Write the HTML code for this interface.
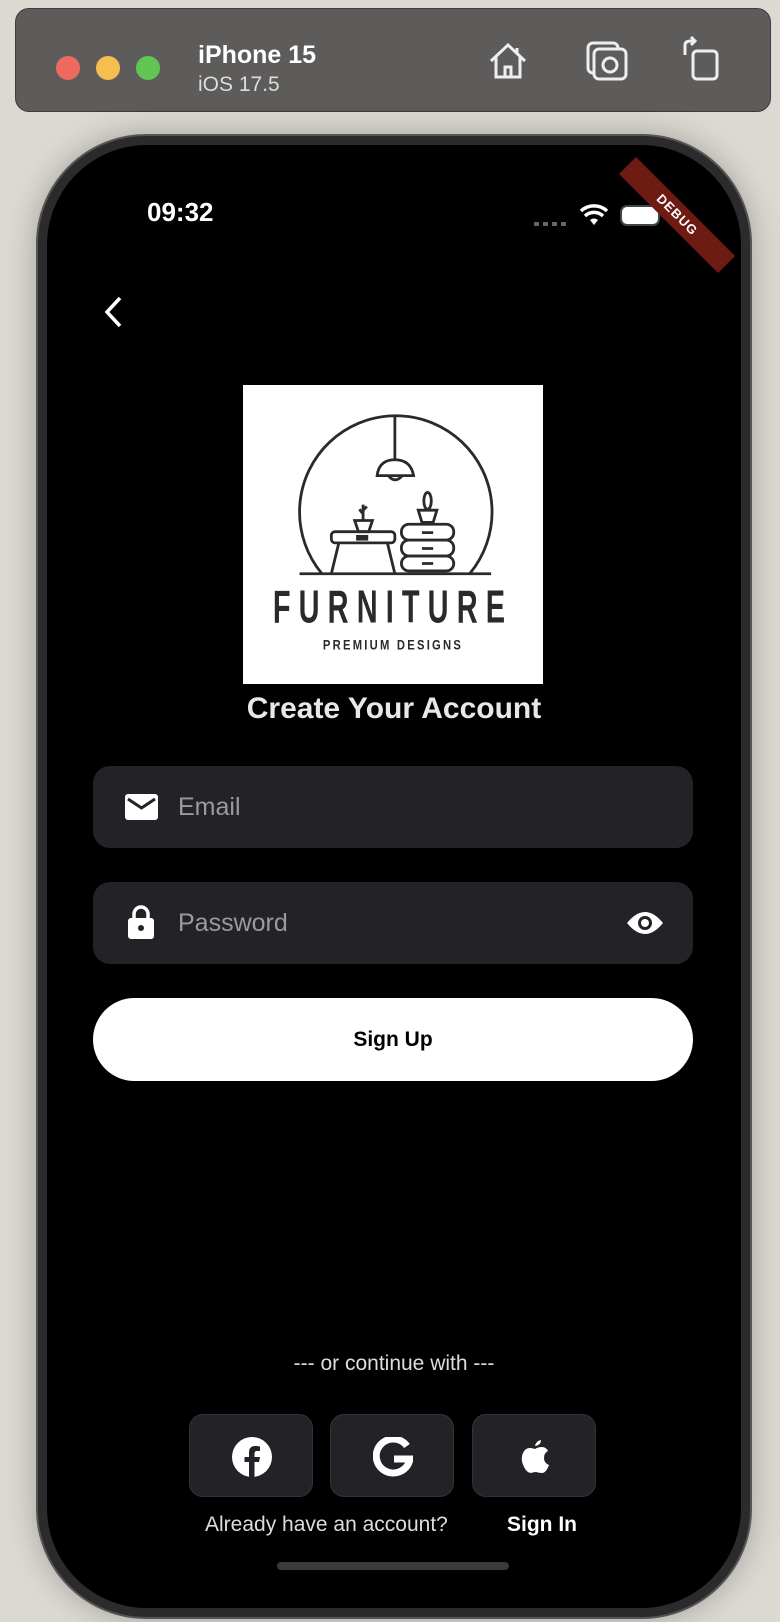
<!DOCTYPE html>
<html><head><meta charset="utf-8"><style>
*{margin:0;padding:0;box-sizing:border-box}
html,body{width:780px;height:1622px;overflow:hidden;background:#dcd8d2;font-family:"Liberation Sans",sans-serif}
.bar{position:absolute;left:15px;top:8px;width:756px;height:104px;background:#5e5c5a;border-radius:14px;border:1px solid #3e3c3a}
.dot{position:absolute;top:47px;width:24px;height:24px;border-radius:50%}
.t1{position:absolute;left:198px;top:32px;color:#fff;font-weight:bold;font-size:25px}
.t2{position:absolute;left:198px;top:64px;color:#ddd;font-size:21px}
.phone{position:absolute;left:36px;top:134px;width:716px;height:1485px;border-radius:110px;background:#2b2b2b;border:2px solid #555;box-shadow:0 0 30px rgba(0,0,0,.25)}
.screen{position:absolute;left:47px;top:145px;width:694px;height:1463px;border-radius:100px;background:#000;overflow:hidden}
.field{position:absolute;left:46px;width:600px;height:82px;background:#222227;border-radius:17px}
.ph{position:absolute;left:85px;top:27px;color:#9a9aa0;font-size:25px}
.soc{position:absolute;top:1269px;width:124px;height:83px;background:#222227;border:1px solid #33333a;border-radius:14px}
.soc svg{position:absolute;left:42px;top:22px}
</style></head><body>
<div class="bar">
<div class="dot" style="left:40px;background:#ec6a5e"></div>
<div class="dot" style="left:80px;background:#f4bf4f"></div>
<div class="dot" style="left:120px;background:#61c554"></div>
<div class="t1" style="left:182px">iPhone 15</div>
<div class="t2" style="left:182px">iOS 17.5</div>
<svg style="position:absolute;left:470px;top:30px" width="44" height="44" viewBox="0 0 44 44" fill="none" stroke="#eee" stroke-width="3"><path d="M5 22 L22 6 L39 22 M10 18 V38 H34 V18 M19 38 V28 H25 V38 M31 9 V14"/></svg>
<svg style="position:absolute;left:568px;top:28px" width="46" height="46" viewBox="0 0 46 46" fill="none" stroke="#eee" stroke-width="3"><rect x="4" y="6" width="30" height="30" rx="5"/><rect x="10" y="12" width="32" height="30" rx="5" fill="#5e5c5a"/><circle cx="26" cy="28" r="7"/></svg>
<svg style="position:absolute;left:665px;top:26px" width="44" height="48" viewBox="0 0 44 48" fill="none" stroke="#eee" stroke-width="3"><rect x="12" y="16" width="24" height="28" rx="4"/><path d="M4 20 V10 Q4 6 10 6 H14 M10 2 L14 6 L10 10"/></svg>
</div>
<div class="phone"></div>
<div class="screen">
<div style="position:absolute;left:100px;top:52px;color:#fff;font-size:26px;font-weight:bold">09:32</div>
<div style="position:absolute;left:487px;top:77px;width:34px;height:4px;background:repeating-linear-gradient(90deg,#666 0 5px,transparent 5px 9px)"></div>
<svg style="position:absolute;left:532px;top:58px" width="30" height="24" viewBox="0 0 30 24"><path d="M15 22 L19 17 A6 6 0 0 0 11 17Z" fill="#fff"/><path d="M6 13 A13 13 0 0 1 24 13 M2 8 A19 19 0 0 1 28 8" stroke="#fff" stroke-width="3.5" fill="none"/></svg>
<div style="position:absolute;left:573px;top:60px;width:40px;height:21px;border-radius:7px;background:#fff;border:2px solid #444"></div>
<div style="position:absolute;left:560px;top:58px;width:140px;height:24px;background:#6e1b14;transform:rotate(45deg);color:#fff;font-size:13px;font-weight:bold;text-align:center;line-height:24px;letter-spacing:1px">DEBUG</div>
<svg style="position:absolute;left:55px;top:150px" width="24" height="34" viewBox="0 0 24 34"><path d="M18 3 L5 17 L18 31" stroke="#fff" stroke-width="3.5" fill="none"/></svg>
<div style="position:absolute;left:196px;top:240px;width:300px;height:299px;background:#fff">
<svg width="300" height="299" viewBox="0 0 320 320" fill="none" stroke="#2a2a28" stroke-width="3">
<path d="M84 202 A103 103 0 1 1 242 202"/>
<line x1="162" y1="32" x2="162" y2="80"/>
<path d="M143 97 Q145 80 162 80 Q179 80 182 97 Z M155 97 Q162 106 170 97"/>
<line x1="60" y1="202" x2="265" y2="202"/>
<rect x="94" y="157" width="68" height="12" rx="4"/><path d="M102 169 L94 202 M154 169 L162 202"/><rect x="122" y="162" width="10" height="3"/>
<path d="M119 145 H138 L134 157 H123 Z M128 145 V128 M128 138 L124 133 M128 134 L132 130"/>
<rect x="169" y="149" width="56" height="17" rx="8"/><rect x="169" y="166" width="56" height="17" rx="8"/><rect x="169" y="183" width="56" height="16" rx="8"/>
<path d="M191 158 H203 M191 175 H203 M191 191 H203"/>
<path d="M187 134 H207 L203 147 H191 Z"/><ellipse cx="197" cy="124" rx="4" ry="9"/>
<g transform="translate(160 254) scale(0.62 1)"><text x="0" y="0" text-anchor="middle" font-family="Liberation Sans,sans-serif" font-size="50" font-weight="bold" fill="#2a2a28" stroke="none" letter-spacing="14">FURNITURE</text></g>
<g transform="translate(160 283) scale(0.8 1)"><text x="0" y="0" text-anchor="middle" font-family="Liberation Sans,sans-serif" font-size="15" font-weight="bold" fill="#2a2a28" stroke="none" letter-spacing="3">PREMIUM DESIGNS</text></g>
</svg></div>
<div style="position:absolute;left:0;width:694px;top:547px;text-align:center;color:#e8e8e8;font-size:30px;font-weight:bold">Create Your Account</div>
<div class="field" style="top:621px">
<svg style="position:absolute;left:32px;top:28px" width="33" height="26" viewBox="0 0 33 26"><rect width="33" height="26" rx="3" fill="#fff"/><path d="M3 5 L16.5 14 L30 5" stroke="#222227" stroke-width="3" fill="none"/></svg>
<div class="ph">Email</div></div>
<div class="field" style="top:737px">
<svg style="position:absolute;left:34px;top:23px" width="28" height="34" viewBox="0 0 28 34"><path d="M7 14 V9 A7 7 0 0 1 21 9 V14" stroke="#fff" stroke-width="3.5" fill="none"/><rect x="1" y="13" width="26" height="21" rx="3" fill="#fff"/><circle cx="14" cy="23" r="3" fill="#222227"/></svg>
<div class="ph">Password</div>
<svg style="position:absolute;left:533px;top:28px" width="38" height="26" viewBox="0 0 38 26"><path d="M1 13 Q19 -9 37 13 Q19 35 1 13Z" fill="#fff"/><circle cx="19" cy="13" r="7" fill="#222227"/><circle cx="19" cy="13" r="4" fill="#fff"/></svg>
</div>
<div style="position:absolute;left:46px;top:853px;width:600px;height:83px;background:#fff;border-radius:42px;text-align:center;line-height:83px;font-size:21px;font-weight:bold;color:#000">Sign Up</div>
<div style="position:absolute;left:0;width:694px;top:1207px;text-align:center;color:#ddd;font-size:21px">--- or continue with ---</div>
<div class="soc" style="left:142px"><svg width="40" height="40" viewBox="0 0 40 40"><circle cx="20" cy="20" r="20" fill="#fff"/><path d="M22.5 40 V25 H27 L28 20 H22.5 V16.5 Q22.5 14 25 14 H28 V9.5 Q26 9 23.5 9 Q17 9 17 15.5 V20 H12.5 V25 H17 V40Z" fill="#222227"/></svg></div>
<div class="soc" style="left:283px"><svg width="40" height="40" viewBox="0 0 40 40"><path d="M34 9 A17 17 0 1 0 37 22 H21" stroke="#fff" stroke-width="7" fill="none"/></svg></div>
<div class="soc" style="left:425px"><svg width="40" height="40" viewBox="0 0 40 40"><path d="M20 12 Q23 10 27 10 Q31 10 33 14 Q29 16 29 21 Q29 26 34 28 Q31 36 27 36 Q24 36 21 35 Q19 35 16 36 Q12 36 9 30 Q6 24 7 19 Q9 11 15 11 Q17 11 20 12Z M20 9 Q21 4 26 3 Q26 8 20 9Z" fill="#fff"/></svg></div>
<div style="position:absolute;left:158px;top:1368px;color:#ddd;font-size:21px">Already have an account?</div>
<div style="position:absolute;left:460px;top:1368px;color:#fff;font-size:21px;font-weight:bold">Sign In</div>
<div style="position:absolute;left:230px;top:1417px;width:232px;height:8px;border-radius:4px;background:#3a3a3a"></div>
</div>
</body></html>
